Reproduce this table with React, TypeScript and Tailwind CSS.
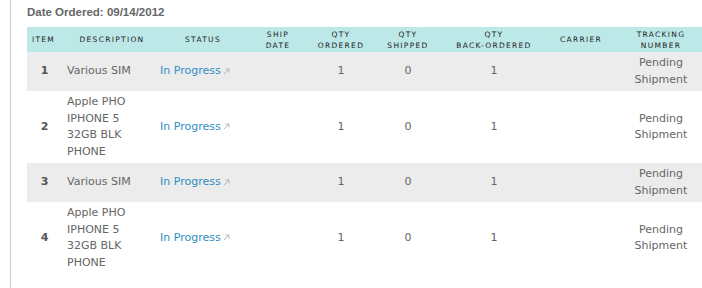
import React from 'react';

interface OrderLine {
  item: number;
  description: string;
  status: string;
  shipDate: string;
  ordered: number;
  shipped: number;
  backOrdered: number;
  carrier: string;
  tracking: string;
}

const lines: OrderLine[] = [
  { item: 1, description: 'Various SIM', status: 'In Progress', shipDate: '', ordered: 1, shipped: 0, backOrdered: 1, carrier: '', tracking: 'Pending Shipment' },
  { item: 2, description: 'Apple PHO IPHONE 5 32GB BLK PHONE', status: 'In Progress', shipDate: '', ordered: 1, shipped: 0, backOrdered: 1, carrier: '', tracking: 'Pending Shipment' },
  { item: 3, description: 'Various SIM', status: 'In Progress', shipDate: '', ordered: 1, shipped: 0, backOrdered: 1, carrier: '', tracking: 'Pending Shipment' },
  { item: 4, description: 'Apple PHO IPHONE 5 32GB BLK PHONE', status: 'In Progress', shipDate: '', ordered: 1, shipped: 0, backOrdered: 1, carrier: '', tracking: 'Pending Shipment' },
];

const cols = 'grid grid-cols-[33px_92px_102px_48px_78px_56px_116px_58px_92px]';

const ExternalArrow = () => (
  <svg width="7" height="7" viewBox="0 0 7 7" className="ml-[2px] -mt-[1px]" fill="none" stroke="#b5b5b5" strokeWidth="1">
    <path d="M1 6 L6 1 M2.5 1 H6 V4.5" />
  </svg>
);

const HeaderCell = ({ children, className = '' }: { children: React.ReactNode; className?: string }) => (
  <div className={`flex items-center justify-center text-center ${className}`}>{children}</div>
);

const OrderTable: React.FC = () => {
  return (
    <div className="w-[675px]">
      <div
        className={`${cols} h-[25px] bg-[#bce8e8] text-[#222] uppercase text-[7.5px] leading-[11px] tracking-[1.3px]`}
        style={{ fontFamily: '"DejaVu Sans", sans-serif' }}
      >
        <HeaderCell>Item</HeaderCell>
        <HeaderCell className="pl-[12px]">Description</HeaderCell>
        <HeaderCell>Status</HeaderCell>
        <HeaderCell>Ship<br />Date</HeaderCell>
        <HeaderCell>Qty<br />Ordered</HeaderCell>
        <HeaderCell>Qty<br />Shipped</HeaderCell>
        <HeaderCell>Qty<br />Back-Ordered</HeaderCell>
        <HeaderCell>Carrier</HeaderCell>
        <HeaderCell className="pl-[10px]">Tracking<br />Number</HeaderCell>
      </div>
      {lines.map((line, i) => (
        <div
          key={line.item}
          className={`${cols} py-[3px] text-[11px] leading-[16.5px] text-[#666] ${i % 2 === 0 ? 'bg-[#ececec]' : 'bg-white'}`}
          style={{ fontFamily: '"DejaVu Sans", Verdana, sans-serif' }}
        >
          <div className="flex items-center justify-center pl-[2px] font-bold text-[#555]">{line.item}</div>
          <div className="flex items-center pl-[7px] pr-[7px]">{line.description}</div>
          <div className="flex items-center pl-[8px]">
            <span className="text-[#2e8fc4]">{line.status}</span>
            <ExternalArrow />
          </div>
          <div className="flex items-center justify-center">{line.shipDate}</div>
          <div className="flex items-center justify-center">{line.ordered}</div>
          <div className="flex items-center justify-center">{line.shipped}</div>
          <div className="flex items-center justify-center">{line.backOrdered}</div>
          <div className="flex items-center justify-center">{line.carrier}</div>
          <div className="flex items-center justify-center pl-[10px] text-center">
            <span className="w-[60px]">{line.tracking}</span>
          </div>
        </div>
      ))}
    </div>
  );
};

export default function App() {
  return (
    <div className="h-[288px] w-[702px] overflow-hidden bg-white">
      <div className="ml-[10px] h-full border-l border-[#cccccc] pl-[16px] pt-[5px]">
        <div
          className="mb-[8px] text-[11.5px] font-bold leading-[14px] text-[#666]"
          style={{ fontFamily: '"Liberation Sans", Arial, sans-serif' }}
        >
          Date Ordered: 09/14/2012
        </div>
        <OrderTable />
      </div>
    </div>
  );
}
